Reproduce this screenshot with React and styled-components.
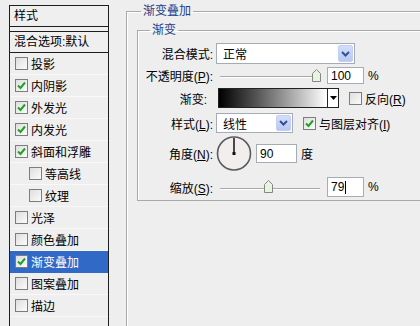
import React from "react";
import styled, { createGlobalStyle } from "styled-components";

const Global = createGlobalStyle`
  html, body {
    margin: 0;
    padding: 0;
    background: #eeeeee;
    overflow: hidden;
  }
  body {
    font-family: "Liberation Sans", "Noto Sans CJK SC", sans-serif;
    font-size: 12px;
    color: #000;
  }
`;

const Page = styled.div`
  display: flex;
  align-items: flex-start;
  width: 420px;
  height: 326px;
  overflow: hidden;
`;

/* left list of layer styles */
const StylesPanel = styled.div`
  flex: none;
  width: 98px;
  height: 340px;
  margin: 5px 0 0 9px;
  border: 1px solid #1e1e1e;
  background: #efefef;
`;

const PanelHead = styled.div`
  height: 20px;
  line-height: 20px;
  padding-left: 4px;
  border-bottom: 1px solid #1e1e1e;
  margin-bottom: 4px;
`;

const BlendRow = styled.div`
  height: 20px;
  line-height: 20px;
  padding-left: 4px;
  border-top: 1px solid #1e1e1e;
  border-bottom: 1px solid #1e1e1e;
`;

const Item = styled.div`
  box-sizing: border-box;
  height: 22px;
  display: flex;
  align-items: center;
  gap: 3px;
  padding-left: ${(p) => (p.$sub ? 19 : 5)}px;
  border-bottom: 1px solid ${(p) => (p.$active ? "#3169c6" : "#f8f8f8")};
  background: ${(p) => (p.$active ? "#3169c6" : "transparent")};
  color: ${(p) => (p.$active ? "#fff" : "#000")};
`;

const Box = styled.span`
  flex: none;
  box-sizing: border-box;
  width: 13px;
  height: 13px;
  border: 1px solid #7d7d7d;
  background: linear-gradient(135deg, #dedede, #fbfbfb);
  display: inline-flex;
  align-items: center;
  justify-content: center;
`;

const Check = ({ on }) => (
  <Box>
    {on && (
      <svg width="11" height="11" viewBox="0 0 11 11">
        <path d="M2 5.5 L4.5 8 L9 2.5" fill="none" stroke="#23a025" strokeWidth="2" />
      </svg>
    )}
  </Box>
);

/* right side group boxes */
const Group = styled.fieldset`
  flex: none;
  min-width: 0;
  width: 330px;
  height: 340px;
  margin: 4px 0 0 17px;
  padding: 0 0 0 10px;
  border: 1px solid #a9a9a9;
  box-shadow: inset 1px 1px 0 #ffffff;
`;

const Legend = styled.legend`
  margin-left: ${(p) => p.$ml}px;
  padding: 0 2px;
  line-height: 14px;
  color: #1f3c86;
`;

const InnerGroup = styled.fieldset`
  min-width: 0;
  width: 320px;
  margin: 5px 0 0 0;
  padding: 6px 0 3px 0;
  border: 1px solid #a9a9a9;
  box-shadow: inset 1px 1px 0 #ffffff;
`;

const Row = styled.div`
  display: flex;
  align-items: center;
  gap: 3px;
  height: ${(p) => p.$h}px;
  margin-top: ${(p) => p.$mt || 0}px;
`;

const Label = styled.span`
  flex: none;
  width: ${(p) => 75 - (p.$pr || 0)}px;
  padding-right: ${(p) => p.$pr || 0}px;
  text-align: right;
  white-space: nowrap;
`;

const Key = styled.span`
  text-decoration: underline;
`;

const Select = styled.div`
  flex: none;
  box-sizing: border-box;
  width: ${(p) => p.$w}px;
  height: ${(p) => p.$h}px;
  display: flex;
  align-items: center;
  justify-content: space-between;
  padding: 0 1px 0 6px;
  background: #fff;
  border: 1px solid #a5acb5;
`;

const DropButton = styled.span`
  box-sizing: border-box;
  width: 15px;
  height: ${(p) => p.$h}px;
  display: flex;
  align-items: center;
  justify-content: center;
  background: linear-gradient(#d3defb, #b7c8f3);
  border: 1px solid #c3d0f3;
  border-radius: 2px;
`;

const Chevron = () => (
  <svg width="9" height="6" viewBox="0 0 9 6">
    <path d="M1 1 L4.5 4.5 L8 1" fill="none" stroke="#35508f" strokeWidth="2" />
  </svg>
);

const Slider = styled.div`
  flex: none;
  position: relative;
  width: 106px;
  height: 14px;
  display: flex;
  align-items: center;
`;

const Track = styled.div`
  width: 100px;
  height: 1px;
  margin: 3px 0 0 4px;
  background: #a8a8a8;
  border-bottom: 1px solid #ffffff;
`;

const Thumb = styled.svg`
  position: absolute;
  top: 0;
  margin-left: -4px;
`;

const SliderControl = ({ pos }) => (
  <Slider>
    <Track />
    <Thumb width="9" height="13" viewBox="0 0 9 13" style={{ left: 4 + pos * 96 }}>
      <path d="M0.5 4.5 L4.5 0.5 L8.5 4.5 L8.5 12.5 L0.5 12.5 Z" fill="#e8f3e0" stroke="#7f8a80" />
    </Thumb>
  </Slider>
);

const Field = styled.div`
  flex: none;
  box-sizing: border-box;
  width: ${(p) => p.$w}px;
  height: ${(p) => p.$h}px;
  margin-left: ${(p) => p.$ml || 0}px;
  padding-left: 3px;
  display: flex;
  align-items: center;
  background: #fff;
  border: 1px solid #a5acb5;
`;

const Caret = styled.span`
  width: 1px;
  height: 13px;
  margin-left: 1px;
  background: #000;
`;

const Unit = styled.span`
  margin-left: 1px;
`;

const GradientBox = styled.div`
  flex: none;
  box-sizing: border-box;
  width: 121px;
  height: 20px;
  margin-left: 2px;
  display: flex;
  border: 1px solid #222;
`;

const GradientFill = styled.div`
  flex: 1;
  background: linear-gradient(to right, #000 0%, #555 35%, #fff 100%);
`;

const GradientButton = styled.span`
  width: 10px;
  display: flex;
  align-items: center;
  justify-content: center;
  background: #fff;
  border-left: 1px solid #222;
`;

const CheckLabel = styled.label`
  display: flex;
  align-items: center;
  gap: 3px;
  margin-left: 7px;
  white-space: nowrap;
`;

const Dial = () => (
  <svg width="36" height="37" viewBox="0 0 36 37">
    <circle cx="18" cy="18.5" r="16.5" fill="#f2eeee" stroke="#5b5b5b" strokeWidth="1.6" />
    <line x1="18" y1="18.5" x2="18" y2="3" stroke="#111" strokeWidth="1.5" />
    <rect x="16.5" y="17" width="3" height="3" fill="#111" />
  </svg>
);

const styleItems = [
  { name: "投影", on: false },
  { name: "内阴影", on: true },
  { name: "外发光", on: true },
  { name: "内发光", on: true },
  { name: "斜面和浮雕", on: true },
  { name: "等高线", on: false, sub: true },
  { name: "纹理", on: false, sub: true },
  { name: "光泽", on: false },
  { name: "颜色叠加", on: false },
  { name: "渐变叠加", on: true, active: true },
  { name: "图案叠加", on: false },
  { name: "描边", on: false },
];

export default function App() {
  return (
    <Page>
      <Global />
      <StylesPanel>
        <PanelHead>样式</PanelHead>
        <BlendRow>混合选项:默认</BlendRow>
        {styleItems.map((it) => (
          <Item key={it.name} $sub={it.sub} $active={it.active}>
            <Check on={it.on} />
            <span>{it.name}</span>
          </Item>
        ))}
      </StylesPanel>

      <Group>
        <Legend $ml={4}>渐变叠加</Legend>
        <InnerGroup>
          <Legend $ml={12}>渐变</Legend>

          <Row $h={21}>
            <Label>混合模式:</Label>
            <Select $w={139} $h={21}>
              <span>正常</span>
              <DropButton $h={17}>
                <Chevron />
              </DropButton>
            </Select>
          </Row>

          <Row $h={17} $mt={3}>
            <Label>
              不透明度(<Key>P</Key>):
            </Label>
            <SliderControl pos={1} />
            <Field $w={37} $h={17} $ml={2}>100</Field>
            <Unit>%</Unit>
          </Row>

          <Row $h={20} $mt={4}>
            <Label $pr={6}>渐变:</Label>
            <GradientBox>
              <GradientFill />
              <GradientButton>
                <svg width="7" height="4" viewBox="0 0 7 4">
                  <path d="M0 0 L7 0 L3.5 4 Z" fill="#000" />
                </svg>
              </GradientButton>
            </GradientBox>
            <CheckLabel>
              <Check on={false} />
              <span>
                反向(<Key>R</Key>)
              </span>
            </CheckLabel>
          </Row>

          <Row $h={20} $mt={5}>
            <Label>
              样式(<Key>L</Key>):
            </Label>
            <Select $w={77} $h={20}>
              <span>线性</span>
              <DropButton $h={16}>
                <Chevron />
              </DropButton>
            </Select>
            <CheckLabel>
              <Check on={true} />
              <span>
                与图层对齐(<Key>I</Key>)
              </span>
            </CheckLabel>
          </Row>

          <Row $h={37} $mt={2}>
            <Label>
              角度(<Key>N</Key>):
            </Label>
            <Dial />
            <Field $w={41} $h={19} $ml={1}>90</Field>
            <Unit>度</Unit>
          </Row>

          <Row $h={20} $mt={5}>
            <Label>
              缩放(<Key>S</Key>):
            </Label>
            <SliderControl pos={0.5} />
            <Field $w={37} $h={20} $ml={2}>
              79
              <Caret />
            </Field>
            <Unit>%</Unit>
          </Row>
        </InnerGroup>
      </Group>
    </Page>
  );
}
